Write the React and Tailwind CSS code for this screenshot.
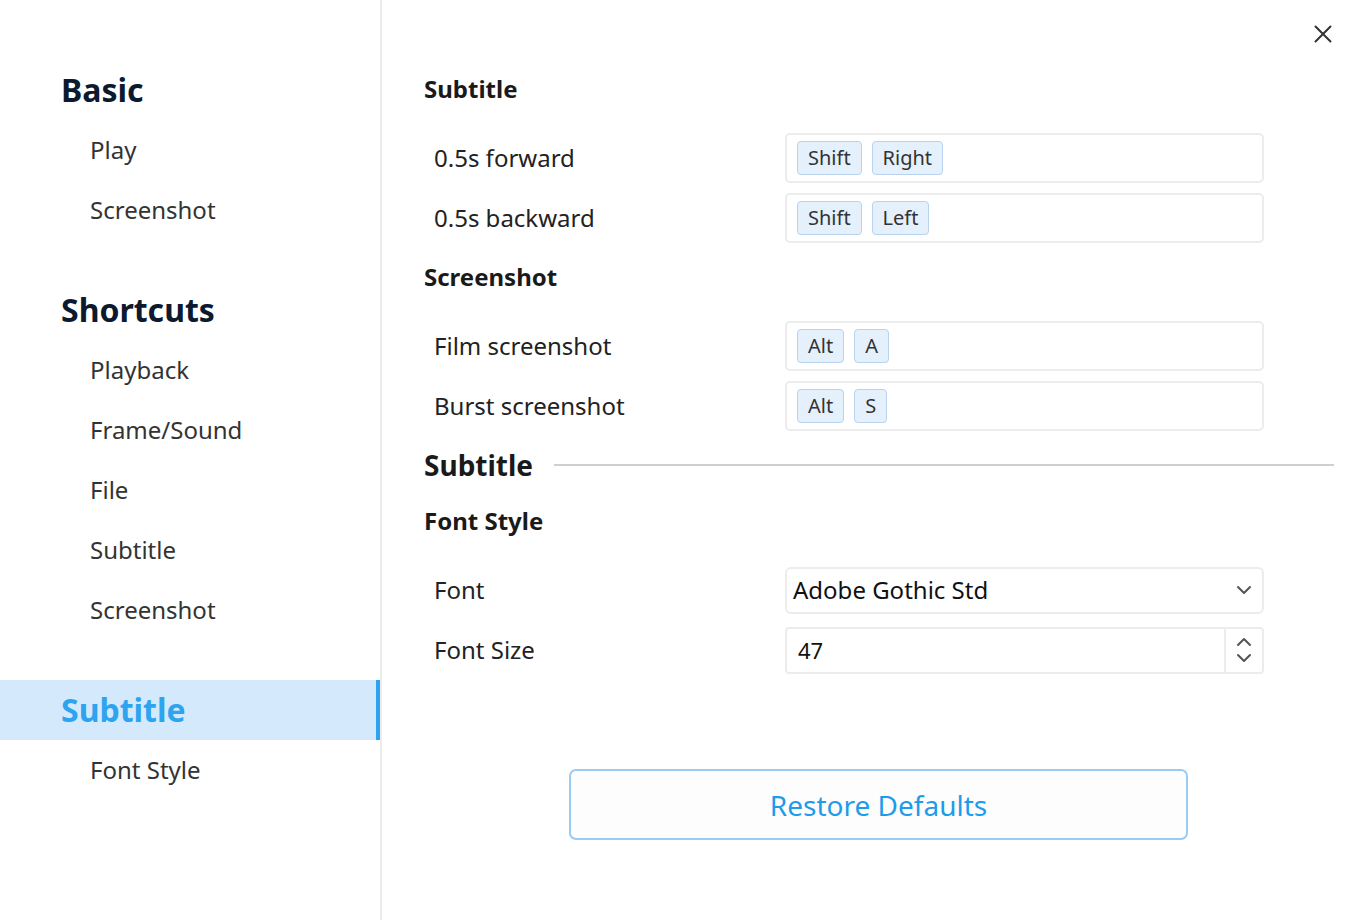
import React, { useState } from "react";

const nav = [
  { title: "Basic", items: ["Play", "Screenshot"] },
  {
    title: "Shortcuts",
    items: ["Playback", "Frame/Sound", "File", "Subtitle", "Screenshot"],
  },
  { title: "Subtitle", items: ["Font Style"], active: true },
];

const Key = ({ children }) => (
  <span className="h-[34px] px-[10px] flex items-center rounded-[4px] border border-[#b9d3ee] bg-[#e5f0fd] text-[20px] text-[#333]">
    {children}
  </span>
);

const ShortcutRow = ({ label, keys }) => (
  <div className="flex items-center h-[50px]">
    <div className="w-[361px] pl-[10px] text-[24px] text-[#222]">{label}</div>
    <div className="w-[479px] h-[50px] rounded-[5px] border-2 border-[#ececec] flex items-center gap-[10px] px-[10px]">
      {keys.map((k) => (
        <Key key={k}>{k}</Key>
      ))}
    </div>
  </div>
);

const Chevron = ({ up }) => (
  <svg width="16" height="10" viewBox="0 0 16 10" fill="none">
    <path
      d={up ? "M2 8l6-6 6 6" : "M2 2l6 6 6-6"}
      stroke="#555"
      strokeWidth="2"
      strokeLinecap="round"
      strokeLinejoin="round"
    />
  </svg>
);

export default function App() {
  const [size, setSize] = useState(47);

  return (
    <div
      className="w-[1360px] h-[920px] flex bg-white overflow-hidden"
      style={{ fontFamily: '"Noto Sans", "Open Sans", sans-serif' }}
    >
      {/* SIDEBAR */}
      <aside className="w-[382px] shrink-0 border-r-2 border-[#ececec] pt-[60px]">
        {nav.map((group, gi) => (
          <div key={gi} className={gi > 0 ? "mt-[40px]" : ""}>
            <div
              className={`h-[60px] flex items-center pl-[61px] text-[32px] font-bold ${
                group.active
                  ? "bg-[#d4eafc] text-[#2ea3ef] border-r-4 border-[#2ea3ef]"
                  : "text-[#0b1a2e]"
              }`}
            >
              {group.title}
            </div>
            {group.items.map((item, ii) => (
              <div
                key={ii}
                className="h-[60px] flex items-center pl-[90px] text-[24px] text-[#333]"
              >
                {item}
              </div>
            ))}
          </div>
        ))}
      </aside>

      {/* MAIN */}
      <main className="flex-1 relative pl-[42px] pr-[26px]">
        <button className="absolute right-[27px] top-[24px] w-[20px] h-[20px] flex items-center justify-center">
          <svg width="18" height="18" viewBox="0 0 18 18" fill="none">
            <path d="M1.5 1.5l15 15M16.5 1.5l-15 15" stroke="#333" strokeWidth="2" strokeLinecap="round" />
          </svg>
        </button>

        <h3 className="mt-[69px] h-[40px] flex items-center text-[24px] font-bold text-[#1a1a1a]">
          Subtitle
        </h3>
        <div className="mt-[24px] flex flex-col gap-[10px]">
          <ShortcutRow label="0.5s forward" keys={["Shift", "Right"]} />
          <ShortcutRow label="0.5s backward" keys={["Shift", "Left"]} />
        </div>

        <h3 className="mt-[14px] h-[40px] flex items-center text-[24px] font-bold text-[#1a1a1a]">
          Screenshot
        </h3>
        <div className="mt-[24px] flex flex-col gap-[10px]">
          <ShortcutRow label="Film screenshot" keys={["Alt", "A"]} />
          <ShortcutRow label="Burst screenshot" keys={["Alt", "S"]} />
        </div>

        <div className="mt-[14px] h-[40px] flex items-center gap-[21px]">
          <h2 className="text-[28px] font-bold text-[#1a1a1a]">Subtitle</h2>
          <div className="flex-1 h-[2px] bg-[#cfcfcf]" />
        </div>

        <h3 className="mt-[16px] h-[40px] flex items-center text-[24px] font-bold text-[#1a1a1a]">
          Font Style
        </h3>

        <div className="mt-[26px] flex items-center h-[46px]">
          <div className="w-[361px] pl-[10px] text-[24px] text-[#222]">Font</div>
          <div className="w-[479px] h-[47px] rounded-[6px] border-2 border-[#ececec] flex items-center justify-between pl-[6px] pr-[10px]">
            <span className="text-[24px] text-[#111]">Adobe Gothic Std</span>
            <Chevron />
          </div>
        </div>

        <div className="mt-[14px] flex items-center h-[46px]">
          <div className="w-[361px] pl-[10px] text-[24px] text-[#222]">Font Size</div>
          <div className="w-[479px] h-[47px] rounded-[4px] border-2 border-[#ececec] flex items-stretch">
            <input
              value={size}
              onChange={(e) => setSize(e.target.value)}
              className="flex-1 min-w-0 pl-[11px] text-[22px] text-[#111] outline-none bg-transparent"
            />
            <div className="w-[38px] border-l-2 border-[#ececec] flex flex-col items-center justify-center gap-[6px]">
              <Chevron up />
              <Chevron />
            </div>
          </div>
        </div>

        <div className="mt-[96px] pl-[145px]">
          <button className="w-[619px] h-[71px] rounded-[7px] border-2 border-[#9ccbf1] bg-[#fdfdfd] text-[28px] text-[#1e9cea]">
            Restore Defaults
          </button>
        </div>
      </main>
    </div>
  );
}
